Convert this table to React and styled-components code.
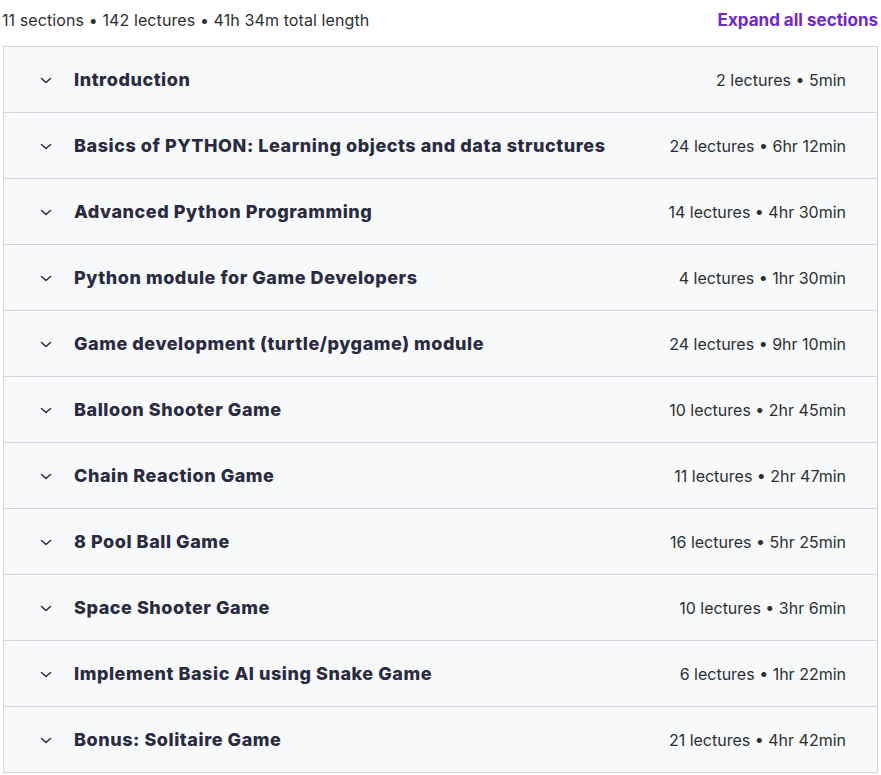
import styled, { createGlobalStyle } from 'styled-components'

const GlobalStyle = createGlobalStyle`
  body {
    margin: 0;
    background: #fff;
    font-family: Inter, "Noto Sans", sans-serif;
    color: #2d2f31;
  }
`

const sections = [
  { title: 'Introduction', lectures: 2, length: '5min' },
  { title: 'Basics of PYTHON: Learning objects and data structures', lectures: 24, length: '6hr 12min' },
  { title: 'Advanced Python Programming', lectures: 14, length: '4hr 30min' },
  { title: 'Python module for Game Developers', lectures: 4, length: '1hr 30min' },
  { title: 'Game development (turtle/pygame) module', lectures: 24, length: '9hr 10min' },
  { title: 'Balloon Shooter Game', lectures: 10, length: '2hr 45min' },
  { title: 'Chain Reaction Game', lectures: 11, length: '2hr 47min' },
  { title: '8 Pool Ball Game', lectures: 16, length: '5hr 25min' },
  { title: 'Space Shooter Game', lectures: 10, length: '3hr 6min' },
  { title: 'Implement Basic AI using Snake Game', lectures: 6, length: '1hr 22min' },
  { title: 'Bonus: Solitaire Game', lectures: 21, length: '4hr 42min' }
]

const Page = styled.div`
  width: 876px;
  padding: 0 3px 0 2px;
`

const Header = styled.div`
  display: flex;
  justify-content: space-between;
  align-items: center;
  height: 40px;
  margin-bottom: 6px;
`

const Summary = styled.span`
  font-size: 16px;
  letter-spacing: 0.1px;
  color: #2d2f31;
`

const ExpandButton = styled.button`
  border: none;
  background: none;
  padding: 0;
  font-family: inherit;
  font-size: 17px;
  font-weight: 700;
  color: #6d28d2;
  cursor: pointer;
`

const List = styled.div`
  margin-left: 1px;
  border: 1px solid #d1d7dc;
  border-bottom: none;
`

const Row = styled.div`
  display: flex;
  align-items: center;
  height: 65px;
  padding: 0 31px 0 36px;
  background: #f7f9fa;
  border-bottom: 1px solid #d1d7dc;
`

const Chevron = styled.svg`
  width: 12px;
  height: 12px;
  flex-shrink: 0;
  margin-right: 22px;
`

const Title = styled.h3`
  flex: 1;
  margin: 0;
  font-size: 18px;
  font-weight: 800;
  letter-spacing: 0.55px;
  color: #2a2b3f;
`

const Meta = styled.span`
  font-size: 16px;
  color: #2d2f31;
`

export default function App () {
  return (
    <Page>
      <GlobalStyle />
      <Header>
        <Summary>11 sections • 142 lectures • 41h 34m total length</Summary>
        <ExpandButton>Expand all sections</ExpandButton>
      </Header>
      <List>
        {sections.map(s => (
          <Row key={s.title}>
            <Chevron viewBox='0 0 12 12'>
              <path d='M1.5 4.5 L6 8.5 L10.5 4.5' fill='none' stroke='#2a2b3f' strokeWidth='1.5' strokeLinecap='round' strokeLinejoin='round' />
            </Chevron>
            <Title>{s.title}</Title>
            <Meta>{s.lectures} lectures • {s.length}</Meta>
          </Row>
        ))}
      </List>
    </Page>
  )
}
